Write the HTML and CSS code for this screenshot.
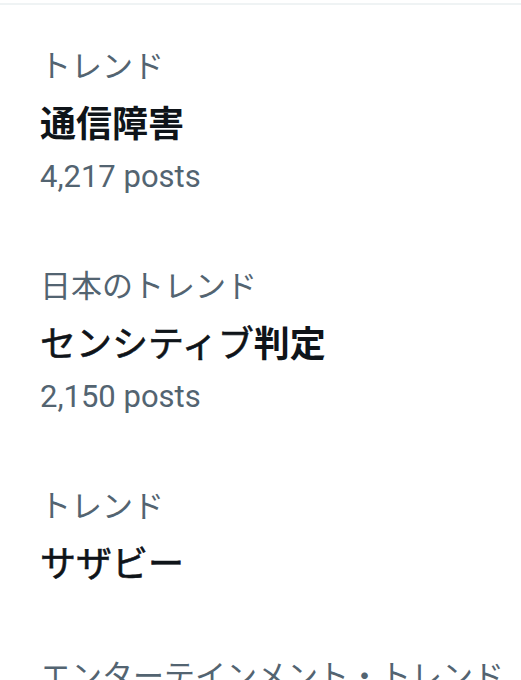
FILE: index.html
```html
<!DOCTYPE html>
<html lang="ja">
<head>
<meta charset="utf-8">
<link rel="stylesheet" href="styles.css">
</head>
<body>
<div class="list">
  <div class="trend">
    <div class="category">トレンド</div>
    <div class="title">通信障害</div>
    <div class="posts">4,217 posts</div>
  </div>
  <div class="trend">
    <div class="category">日本のトレンド</div>
    <div class="title"><span class="kana">センシティブ</span>判定</div>
    <div class="posts">2,150 posts</div>
  </div>
  <div class="trend">
    <div class="category">トレンド</div>
    <div class="title"><span class="kana">サザビー</span></div>
  </div>
  <div class="trend">
    <div class="category">エンターテインメント・トレンド</div>
    <div class="title">&nbsp;</div>
  </div>
</div>
</body>
</html>
```
FILE: styles.css
```css
html, body {
  margin: 0;
  padding: 0;
  background: #ffffff;
}
body {
  width: 521px;
  height: 680px;
  overflow: hidden;
  font-family: "Noto Sans CJK JP", "Noto Sans", sans-serif;
}
.list {
  margin-top: 3px;
  border-top: 2px solid #eff3f4;
  padding-top: 6px;
}
.trend {
  padding: 27px 40px 29px;
}
.category {
  font-size: 31px;
  line-height: 52px;
  color: #536471;
  white-space: nowrap;
}
.title {
  font-size: 36px;
  line-height: 62px;
  font-weight: 700;
  color: #0f1419;
  white-space: nowrap;
}
.kana {
  font-weight: 400;
  -webkit-text-stroke: 0.6px #0f1419;
}
.posts {
  font-family: Roboto, "Noto Sans", sans-serif;
  font-size: 31px;
  line-height: 50px;
  color: #536471;
}
```
